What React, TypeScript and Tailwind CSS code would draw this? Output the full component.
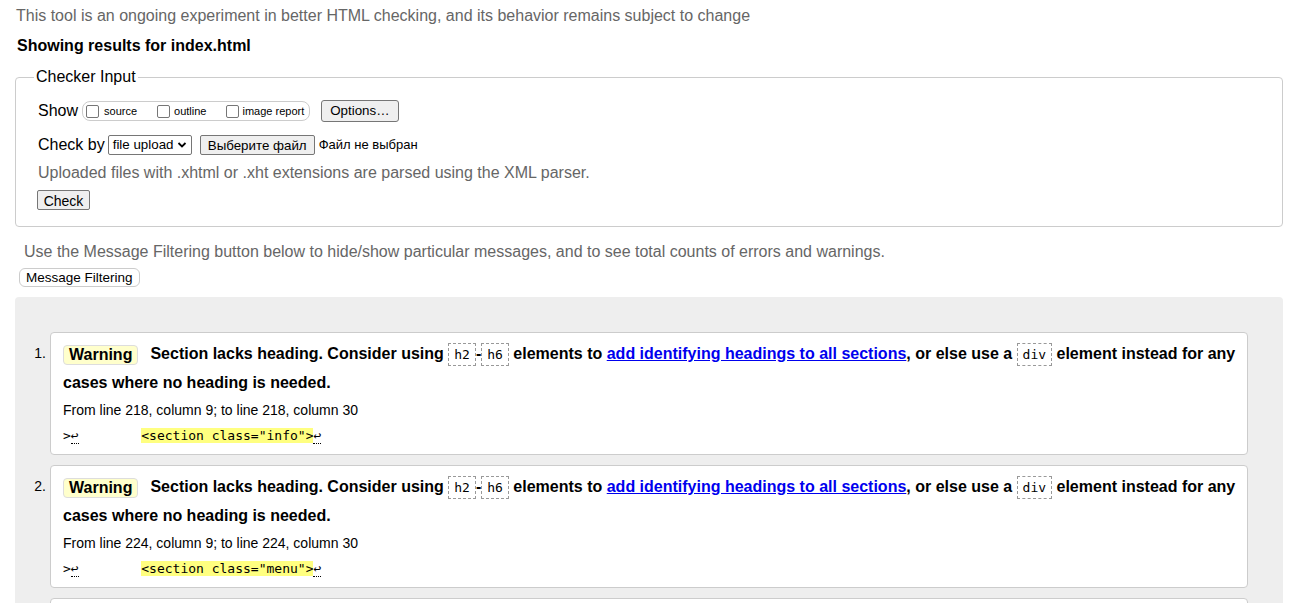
import React from "react";

type Msg = {
  line: number;
  cls: string;
};

const messages: Msg[] = [
  { line: 218, cls: "info" },
  { line: 224, cls: "menu" },
  { line: 230, cls: "about" },
];

const mono = "font-['DejaVu_Sans_Mono','Liberation_Mono',monospace]";

function Code({ children }: { children: React.ReactNode }) {
  return (
    <code
      className={`${mono} inline-block h-[23px] border border-dashed border-[#999] px-[5px] align-middle text-[13px] font-normal leading-[21px]`}
    >
      {children}
    </code>
  );
}

function Box() {
  return (
    <span className="inline-block h-[13px] w-[13px] rounded-[2px] border border-[#767676] bg-white" />
  );
}

function Lf() {
  return (
    <b className="border-b border-dotted border-black font-normal">↩</b>
  );
}

function WarningCard({ n, m }: { n: number; m: Msg }) {
  return (
    <div className="mb-[10px] flex">
      <div className="w-[35px] shrink-0 pr-[4px] pt-[11px] text-right text-[14px] leading-[20px]">
        {n}.
      </div>
      <div className="flex-1 rounded-[4px] border border-[#ccc] bg-white pt-[6px] pb-[8px] pl-[12px] pr-[8px]">
        <p className="text-[16px] font-bold leading-[29px]">
          <span className="mr-[12px] inline-block h-[20px] rounded-[4px] border border-[#ddd] bg-[#ffffcc] px-[5px] align-middle leading-[18px]">
            Warning
          </span>
          Section lacks heading. Consider using <Code>h2</Code>-<Code>h6</Code>{" "}
          elements to{" "}
          <a href="#" className="text-[#0000ee] underline">
            add identifying headings to all sections
          </a>
          , or else use a <Code>div</Code> element instead for any cases where
          no heading is needed.
        </p>
        <p className="mt-[3px] text-[14px] leading-[20px]">
          From line {m.line}, column 9; to line {m.line}, column 30
        </p>
        <p className={`${mono} mt-[6px] whitespace-pre text-[13px] leading-[20px]`}>
          {">"}
          <Lf />
          {"        "}
          <mark className="bg-[#ffff80] text-black">{`<section class="${m.cls}">`}</mark>
          <Lf />
        </p>
      </div>
    </div>
  );
}

export default function App() {
  return (
    <div className="min-h-screen bg-white pl-[15px] pr-[29px] font-['Liberation_Sans',Arial,sans-serif] text-black">
      <p className="ml-[1px] pt-[6px] text-[16px] leading-[20px] text-[#666]">
        This tool is an ongoing experiment in better HTML checking, and its behavior remains subject to change
      </p>
      <h2 className="ml-[2px] mt-[10px] text-[16px] font-bold leading-[20px]">
        Showing results for index.html
      </h2>

      <fieldset className="mt-[10px] rounded-[4px] border border-[#ccc]">
        <legend className="ml-[18px] px-[2px] text-[16px] leading-[22px]">
          Checker Input
        </legend>
        <div className="pb-[13px]">
          <div className="mt-[11px] flex h-[24px] items-center pl-[22px]">
            <span className="text-[16px]">Show</span>
            <div className="ml-[4px] flex h-[20px] items-center rounded-[8px] border border-[#ccc] pl-[3px] pr-[5px] text-[11px]">
              <Box />
              <span className="ml-[5px]">source</span>
              <span className="ml-[20px] flex items-center">
                <Box />
              </span>
              <span className="ml-[4px]">outline</span>
              <span className="ml-[20px] flex items-center">
                <Box />
              </span>
              <span className="ml-[3px]">image report</span>
            </div>
            <button
              type="button"
              className="ml-[11px] h-[22px] rounded-[3px] border border-[#767676] bg-[#efefef] px-[8px] text-[13.33px]"
            >
              Options…
            </button>
          </div>

          <div className="mt-[10px] flex h-[24px] items-center pl-[22px]">
            <span className="text-[16px]">Check by</span>
            <div className="ml-[3px] flex h-[20px] w-[84px] items-center justify-between rounded-[2px] border border-[#767676] pl-[4px] pr-[4px] text-[13.33px]">
              <span>file upload</span>
              <svg width="10" height="8" viewBox="0 0 10 8">
                <path d="M1.5 2 L5 5.5 L8.5 2" fill="none" stroke="#000" strokeWidth="1.8" />
              </svg>
            </div>
            <button
              type="button"
              className="ml-[8px] h-[20px] w-[115px] rounded-[2px] border border-[#767676] bg-[#efefef] text-[13.33px]"
            >
              Выберите файл
            </button>
            <span className="ml-[4px] text-[13px]">Файл не выбран</span>
          </div>

          <p className="mt-[6px] pl-[22px] text-[16px] leading-[20px] text-[#666]">
            Uploaded files with .xhtml or .xht extensions are parsed using the XML parser.
          </p>

          <div className="mt-[6px] pl-[21px]">
            <button
              type="button"
              className="h-[20px] w-[53px] rounded-[2px] border border-[#767676] bg-[#efefef] text-[14px]"
            >
              Check
            </button>
          </div>
        </div>
      </fieldset>

      <p className="mt-[15px] pl-[9px] text-[16px] leading-[20px] text-[#666]">
        Use the Message Filtering button below to hide/show particular messages, and to see total counts of errors and warnings.
      </p>
      <button
        type="button"
        className="ml-[4px] mt-[6px] h-[19px] rounded-[6px] border border-[#ccc] bg-white px-[6px] text-[13.5px] leading-[17px]"
      >
        Message Filtering
      </button>

      <div className="mt-[8px] rounded-[4px] bg-[#eee] pt-[35px] pr-[35px]">
        {messages.map((m, i) => (
          <WarningCard key={m.line} n={i + 1} m={m} />
        ))}
      </div>
    </div>
  );
}
